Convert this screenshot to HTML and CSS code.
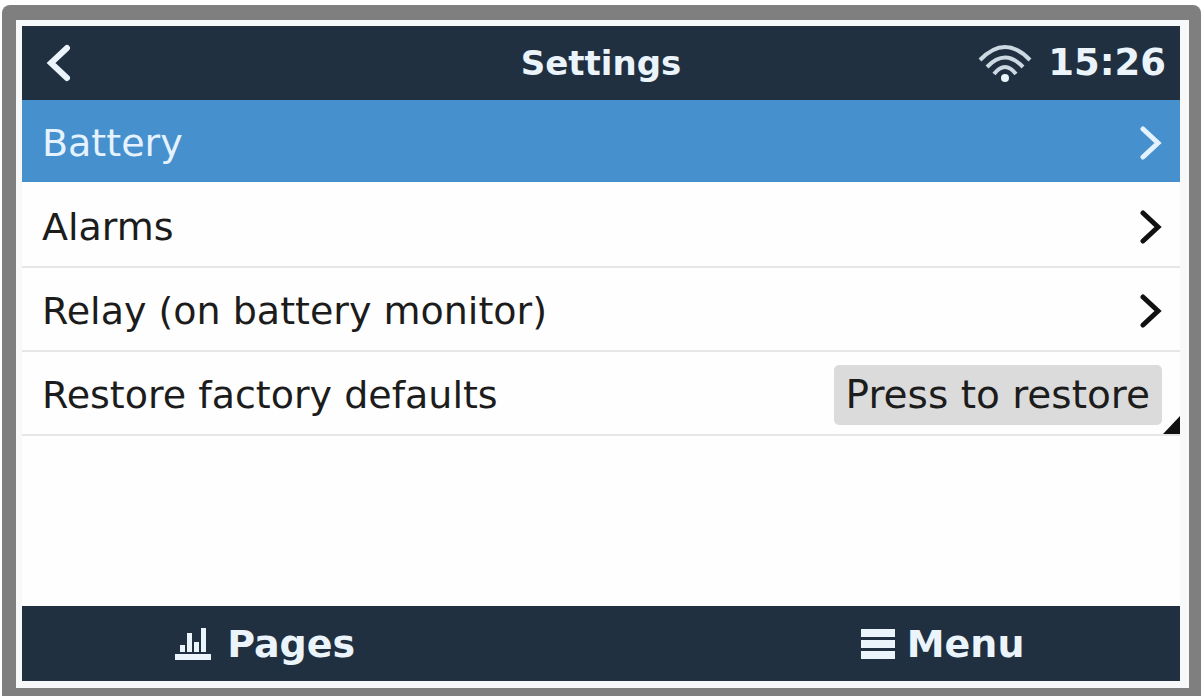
FILE: index.html
```html
<!DOCTYPE html>
<html lang="en">
<head>
	<meta charset="UTF-8">
	<meta name="viewport" content="width=device-width, initial-scale=1">
	<title>Settings</title>
	<link rel="stylesheet" href="styles.css">
</head>
<body>
	<div class="frame">
		<div class="screen">
			<header class="topbar">
				<button class="back" type="button" aria-label="Back">
					<svg width="26" height="38" viewBox="0 0 26 38"><path d="M21 4L5 19l16 15"/></svg>
				</button>
				<h1>Settings</h1>
				<div class="status">
					<svg class="wifi" width="54" height="40" viewBox="0 0 54 40">
						<path d="M2 17Q27-9 52 17"/>
						<path d="M9 24Q27 5 45 24"/>
						<path d="M16 31Q27 17 38 31"/>
						<circle cx="27" cy="35" r="4"/>
					</svg>
					<span>15:26</span>
				</div>
			</header>
			<ul class="list">
				<li class="on">
					<a href="#battery">Battery
						<svg class="arrow" width="22" height="36" viewBox="0 0 22 36"><path d="M3 4l15 14L3 32"/></svg>
					</a>
				</li>
				<li>
					<a href="#alarms">Alarms
						<svg class="arrow" width="22" height="36" viewBox="0 0 22 36"><path d="M3 4l15 14L3 32"/></svg>
					</a>
				</li>
				<li>
					<a href="#relay">Relay (on battery monitor)
						<svg class="arrow" width="22" height="36" viewBox="0 0 22 36"><path d="M3 4l15 14L3 32"/></svg>
					</a>
				</li>
				<li class="action">
					<span id="restore">Restore factory defaults</span>
					<button type="button" aria-describedby="restore">Press to restore</button>
				</li>
			</ul>
			<footer class="bottombar">
				<button class="pages" type="button">
					<svg width="36" height="34" viewBox="0 0 36 34"><path d="M0 27h36v6H0zM5 18h5v7H5zM12 6h5v19h-5zM19 15h5v10h-5zM26 1h5v24h-5z"/></svg>
					Pages
				</button>
				<button class="menu" type="button">
					<svg width="34" height="30" viewBox="0 0 34 30"><path d="M0 0h34v8H0zM0 11h34v8H0zM0 22h34v8H0z"/></svg>
					Menu
				</button>
			</footer>
		</div>
	</div>
</body>
</html>
```
FILE: styles.css
```css
*{
	margin: 0;
	padding: 0;
	box-sizing: border-box;
}
body{
	display: flex;
	min-height: 100vh;
	padding: 5px 0 0 2px;
	background: #fff;
	color: #1c1c1c;
	font: 38px/46px "DejaVu Sans", sans-serif;
}
ul{
	list-style: none;
}
a{
	color: inherit;
	text-decoration: none;
}
button{
	border: 0;
	background: transparent;
	color: inherit;
	font: inherit;
	cursor: pointer;
}
svg{
	display: block;
	flex: none;
}
/* grey case with the thin white rim */
.frame{
	display: flex;
	flex: 1;
	padding: 15px 12px 8px 14px;
	border-radius: 8px 8px 0 0;
	background: #7f7f7f;
}
.screen{
	display: flex;
	flex: 1;
	flex-direction: column;
	border: solid #f7f8f9;
	border-width: 6px 9px 7px 6px;
	background: #fefefe;
}
.topbar{
	display: grid;
	grid-template-columns: 1fr auto 1fr;
	align-items: center;
	height: 74px;
	padding: 0 14px;
	background: #203040;
	color: #ebf4fb;
}
.back{
	justify-self: start;
	padding: 0 10px;
}
.back path{
	fill: none;
	stroke: #ebf4fb;
	stroke-width: 6;
	stroke-linecap: round;
}
.topbar h1{
	font-size: 34px;
	line-height: 46px;
}
.status{
	display: flex;
	align-items: center;
	justify-self: end;
	gap: 16px;
	font-size: 37px;
	font-weight: bold;
}
.wifi{
	fill: #ebf4fb;
}
.wifi path{
	fill: none;
	stroke: #ccd8e2;
	stroke-width: 4;
}
.list{
	flex: 1;
}
.list li{
	position: relative;
	border-bottom: 2px solid #e6e6e6;
}
.list a,.action{
	display: flex;
	align-items: center;
	justify-content: space-between;
	height: 82px;
	padding: 4px 18px 0 20px;
}
.arrow{
	fill: none;
	stroke: #111;
	stroke-width: 5;
	stroke-linecap: round;
}
.list .on{
	border-color: #fefefe;
	background: #4690ce;
	background-clip: padding-box;
	color: #e4f3ff;
}
.on .arrow{
	stroke: #e4f3ff;
}
.list .action{
	height: 84px;
}
.action button{
	height: 60px;
	padding: 0 12px;
	border-radius: 5px;
	background: #dbdbdb;
	font-size: 39px;
}
/* black corner mark */
.action:after{
	content: "";
	position: absolute;
	right: 0;
	bottom: 0;
	width: 17px;
	height: 18px;
	background: #111;
	clip-path: polygon(100% 0, 100% 100%, 0 100%);
}
.bottombar{
	display: grid;
	grid-template-columns: 42% 41%;
	justify-content: space-between;
	height: 75px;
	background: #203040;
	color: #ebf4fb;
	font-weight: bold;
}
.bottombar button{
	display: flex;
	align-items: center;
	justify-content: center;
	gap: 12px;
}
.bottombar .pages{
	gap: 16px;
}
.bottombar svg{
	fill: #ebf4fb;
}
```
